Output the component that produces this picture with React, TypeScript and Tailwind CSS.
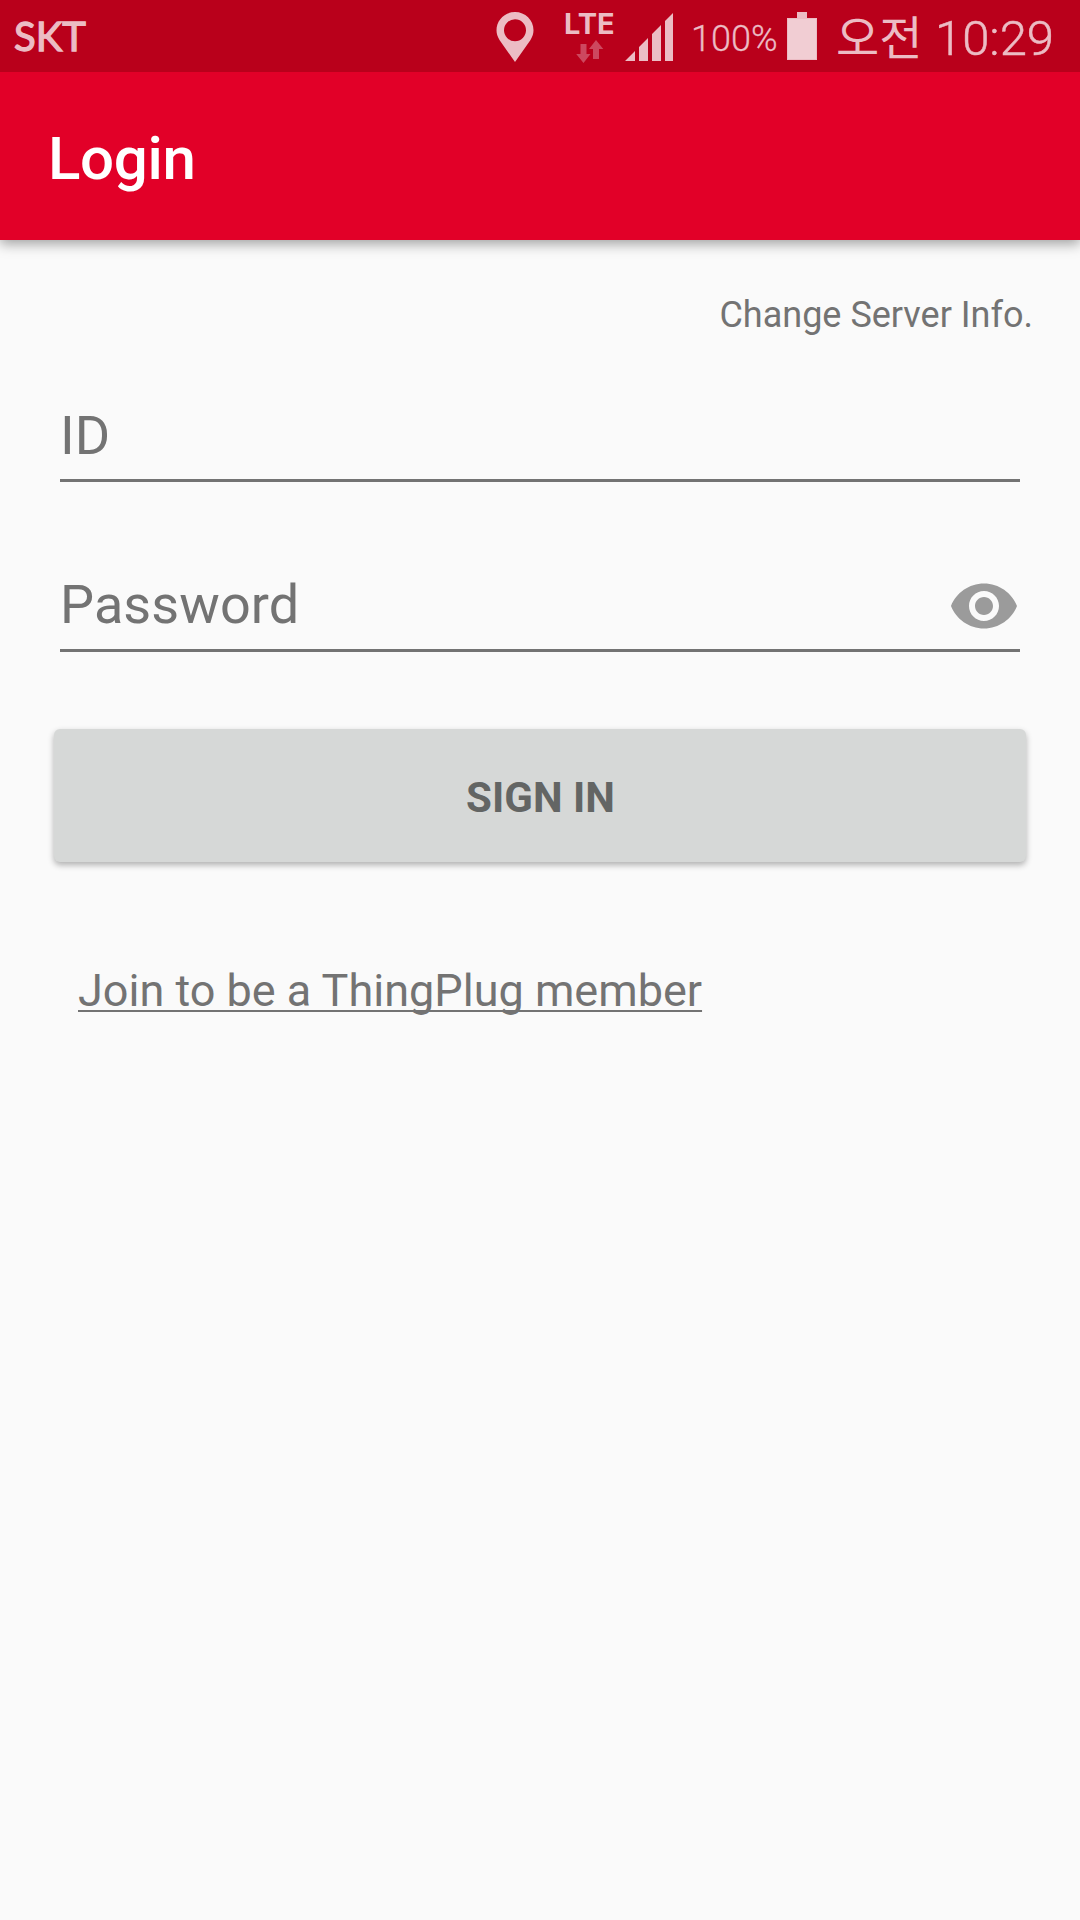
import React from "react";

function PinIcon() {
  return (
    <svg width="38" height="52" viewBox="0 0 38 52" className="shrink-0" fill="#ecbcc4">
      <path
        fillRule="evenodd"
        d="M19 0C8.8 0 .5 8 .5 18.2c0 3.6 1.1 6.4 3 9.8L19 50l15.500-22c1.900-3.400 3-6.200 3-9.800C37.500 8 29.200 0 19 0Zm0 7.200a11 11 0 1 1 0 22 11 11 0 0 1 0-22Z"
      />
    </svg>
  );
}

function DataArrows() {
  return (
    <svg width="28" height="24" viewBox="0 0 28 24" fill="#cd485f">
      <path d="M4.500 4h6v10h4L7.500 23 .2 14h4.300Z" />
      <path d="M20 0l7.300 9H23v10h-6V9h-4Z" />
    </svg>
  );
}

function SignalIcon() {
  return (
    <svg width="48" height="48" viewBox="0 0 48 48" className="shrink-0" fill="#ecbcc4">
      <path d="M0 48L10 38V48ZM14 34L23 25V48H14ZM27 21L36 12V48H27ZM40 8L48 0V48H40Z" />
    </svg>
  );
}

function BatteryIcon() {
  return (
    <svg width="30" height="48" viewBox="0 0 30 48" className="shrink-0">
      <path d="M10 0H20V6H30V48H0V6H10Z" fill="#ecbcc4" />
      <path d="M1 7H29V47H1Z" fill="#f1cdd3" />
    </svg>
  );
}

function EyeIcon() {
  return (
    <svg width="72" height="72" viewBox="0 0 24 24" className="mt-px shrink-0" fill="#9b9b9b">
      <path d="M12 4.500C7 4.500 2.730 7.610 1 12c1.730 4.390 6 7.500 11 7.500s9.270-3.110 11-7.500c-1.730-4.390-6-7.500-11-7.500zM12 17c-2.760 0-5-2.240-5-5s2.240-5 5-5 5 2.240 5 5-2.240 5-5 5zm0-8c-1.660 0-3 1.340-3 3s1.340 3 3 3 3-1.340 3-3-1.340-3-3-3z" />
    </svg>
  );
}

function StatusBar() {
  return (
    <div className="relative z-10 flex h-[72px] shrink-0 items-start bg-[#b9001b] text-[#ecbcc4]">
      <span className="ml-[14px] mt-[12px] font-['Lato'] text-[40px] font-normal leading-[48px] [-webkit-text-stroke:1.3px_#ecbcc4]">
        SKT
      </span>
      <div className="ml-auto flex items-start">
        <div className="mt-[12px] w-[38px]">
          <PinIcon />
        </div>
        <div className="ml-[30px] mt-[13px] flex w-[53px] flex-col">
          <span className="font-['Inter'] text-[29px] font-bold leading-[22px]">LTE</span>
          <div className="ml-[12px] mt-[5px]">
            <DataArrows />
          </div>
        </div>
        <div className="ml-[8px] mt-[13px] w-[48px]">
          <SignalIcon />
        </div>
        <span className="ml-[18px] mt-[15px] w-[86px] whitespace-nowrap text-[36px] font-light leading-[48px] [-webkit-text-stroke:0.3px_#ecbcc4]">
          100%
        </span>
        <div className="ml-[10px] mt-[12px] w-[30px]">
          <BatteryIcon />
        </div>
        <span className="ml-[19px] mt-[7px] w-[87px] whitespace-nowrap font-['Noto_Sans_CJK_KR',sans-serif] text-[47px] leading-[56px]">
          오전
        </span>
        <span className="ml-[12px] mr-[26px] mt-[11px] w-[119px] whitespace-nowrap text-[49px] font-light leading-[56px] [-webkit-text-stroke:0.5px_#ecbcc4]">
          10:29
        </span>
      </div>
    </div>
  );
}

export default function App() {
  return (
    <div className="flex h-[1920px] w-[1080px] flex-col overflow-hidden bg-[#fafafa] font-['Roboto',sans-serif] text-[#737373]">
      <StatusBar />
      <header className="flex h-[168px] shrink-0 items-center bg-[#e20028] pl-[48px] pt-[6px] shadow-[0_4px_12px_rgba(0,0,0,0.36)]">
        <h1 className="text-[60px] font-medium leading-[72px] tracking-[-0.3px] text-white">Login</h1>
      </header>
      <main className="flex flex-col">
        <a className="mr-[47px] mt-[51px] self-end text-[36px] leading-[48px]">Change Server Info.</a>
        <div className="mx-[60px] mt-[53px] flex h-[90px] items-center border-b-[3px] border-[#737373]">
          <span className="text-[54px] leading-[87px]">ID</span>
        </div>
        <div className="mx-[60px] mt-[79px] flex h-[91px] items-center justify-between border-b-[3px] border-[#737373]">
          <span className="text-[54px] leading-[88px] tracking-[0.1px]">Password</span>
          <EyeIcon />
        </div>
        <button className="mx-[54px] mt-[77px] flex h-[133px] items-center justify-center rounded-[6px] bg-[#d6d8d7] pl-px pt-[4px] text-[42px] font-bold leading-[50px] text-[#636564] shadow-[0_3px_6px_rgba(0,0,0,0.3)]">
          SIGN IN
        </button>
        <a className="ml-[78px] mt-[99px] self-start text-[45px] leading-[60px] underline decoration-[2px] underline-offset-[4px] [text-decoration-skip-ink:none]">
          Join to be a ThingPlug member
        </a>
      </main>
    </div>
  );
}
